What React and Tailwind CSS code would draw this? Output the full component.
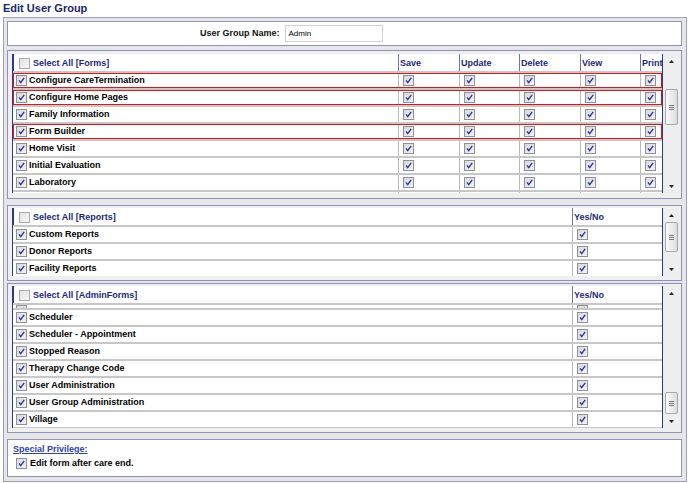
import React from 'react';

const FORMS = [
  { name: 'Configure CareTermination', flag: true },
  { name: 'Configure Home Pages', flag: true },
  { name: 'Family Information' },
  { name: 'Form Builder', flag: true },
  { name: 'Home Visit' },
  { name: 'Initial Evaluation' },
  { name: 'Laboratory' },
];

const REPORTS = ['Custom Reports', 'Donor Reports', 'Facility Reports'];

const ADMIN_FORMS = [
  'Scheduler',
  'Scheduler - Appointment',
  'Stopped Reason',
  'Therapy Change Code',
  'User Administration',
  'User Group Administration',
  'Village',
];

const FORM_COLS = ['Save', 'Update', 'Delete', 'View', 'Print'];
const FORM_GRID = 'grid grid-cols-[385px_61px_60px_61px_60px_23px]';
const YES_GRID = 'grid grid-cols-[559px_91px]';

function Box({ checked = true }) {
  if (!checked) {
    return (
      <span className="block h-[11px] w-[11px] shrink-0 border border-[#a9aaae] bg-linear-to-br from-[#e2e2e2] to-[#f7f7f7]" />
    );
  }
  return (
    <span className="flex h-[11px] w-[11px] shrink-0 items-center justify-center border border-[#8e9096] bg-linear-to-br from-[#d9d9dc] to-[#f3f3f3]">
      <svg width="7" height="7" viewBox="0 0 7 7">
        <path d="M1 3.4 L2.7 5.6 L6.2 0.8" stroke="#2a3898" strokeWidth="1.4" fill="none" />
      </svg>
    </span>
  );
}

function Arrow({ up }) {
  return (
    <svg width="5" height="3" viewBox="0 0 5 3">
      <path d={up ? 'M0 3 L2.5 0 L5 3 Z' : 'M0 0 L5 0 L2.5 3 Z'} fill="#222" />
    </svg>
  );
}

function Scrollbar({ thumbTop, thumbH }) {
  return (
    <div className="flex w-[16px] flex-col bg-[#eeeeee]">
      <div className="flex h-[14px] items-center justify-center">
        <Arrow up />
      </div>
      <div className="flex-1">
        <div
          className="mx-auto flex w-[13px] flex-col items-center justify-center gap-[1px] rounded-[2px] border border-[#a7a7a7] bg-linear-to-r from-[#fbfbfb] to-[#dcdcdc]"
          style={{ marginTop: thumbTop, height: thumbH }}
        >
          <span className="h-px w-[5px] bg-[#7a7a7a]" />
          <span className="h-px w-[5px] bg-[#7a7a7a]" />
          <span className="h-px w-[5px] bg-[#7a7a7a]" />
        </div>
      </div>
      <div className="flex h-[14px] items-center justify-center">
        <Arrow />
      </div>
    </div>
  );
}

function SelectAllCell({ label }) {
  return (
    <div className="flex items-center gap-[3px] border-l border-[#2c3a8c] pl-[5px] pt-[2px] text-[#1c2878]">
      <Box checked={false} />
      <span>{label}</span>
    </div>
  );
}

function HeadCell({ label }) {
  return (
    <div className="flex items-center whitespace-nowrap border-l border-[#7276ad] pl-[1px] pt-[2px] text-[#1c2878]">
      {label}
    </div>
  );
}

function NameCell({ label }) {
  return (
    <div className="flex items-center gap-[2px] overflow-hidden pl-[3px] text-black">
      <Box />
      <span className="whitespace-nowrap">{label}</span>
    </div>
  );
}

function BoxCell({ sliver }) {
  return (
    <div className={`flex border-l border-[#b9b9b9] pl-[4px] ${sliver ? 'items-end' : 'items-center'}`}>
      <Box />
    </div>
  );
}

function Panel({ className = '', children }) {
  return (
    <div className={`flex border border-[#8e90bd] bg-[#efefef] pl-[4px] pr-[2px] ${className}`}>{children}</div>
  );
}

export default function App() {
  return (
    <div className="h-[483px] w-[690px] overflow-hidden bg-white font-['Liberation_Sans',Arial,sans-serif] text-[9px] font-bold leading-none">
      <h1 className="h-[17px] pl-[3px] pt-[2px] text-[11px] font-bold leading-[12px] text-[#1b256c]">Edit User Group</h1>

      <div className="ml-[3px] flex h-[465px] w-[684px] flex-col border border-[#9c9ec4] bg-[#e6e6e6] pb-[3px] pl-[3px] pr-[4px] pt-[3px]">
        {/* group name */}
        <div className="flex h-[25px] shrink-0 items-center border border-[#8e90bd] bg-white pl-[192px]">
          <span className="text-[#111]">User Group Name:</span>
          <div className="ml-[5px] flex h-[17px] w-[98px] items-center border border-[#cfcfcf] bg-white pl-[3px] text-[8px] font-normal text-black">
            Admin
          </div>
        </div>

        {/* forms */}
        <Panel className="mt-[4px] h-[149px] shrink-0 pb-[5px] pt-[3px]">
          <div className="flex h-[139px] w-[652px] flex-col gap-[2px] overflow-hidden border-x border-[#2c3a8c] bg-[#c7c7c7]">
            <div className={`${FORM_GRID} h-[17px] shrink-0 bg-white`}>
              <SelectAllCell label="Select All [Forms]" />
              {FORM_COLS.map((c) => (
                <HeadCell key={c} label={c} />
              ))}
            </div>
            {FORMS.map((f) => (
              <div
                key={f.name}
                className={`${FORM_GRID} h-[15px] shrink-0 bg-white ${f.flag ? 'outline-1 -outline-offset-1 outline-[#e01515]' : ''}`}
              >
                <NameCell label={f.name} />
                {FORM_COLS.map((c) => (
                  <BoxCell key={c} />
                ))}
              </div>
            ))}
            <div className={`${FORM_GRID} h-[15px] shrink-0 bg-white`}>
              <div />
              {FORM_COLS.map((c) => (
                <div key={c} className="border-l border-[#b9b9b9]" />
              ))}
            </div>
          </div>
          <Scrollbar thumbTop={21} thumbH={36} />
        </Panel>

        {/* reports */}
        <Panel className="mt-[6px] h-[76px] shrink-0 pb-[4px] pt-[2px]">
          <div className="flex h-[68px] w-[652px] flex-col gap-[2px] overflow-hidden border-x border-[#2c3a8c] bg-[#c7c7c7]">
            <div className={`${YES_GRID} h-[17px] shrink-0 bg-white`}>
              <SelectAllCell label="Select All [Reports]" />
              <HeadCell label="Yes/No" />
            </div>
            {REPORTS.map((r) => (
              <div key={r} className={`${YES_GRID} h-[15px] shrink-0 bg-white`}>
                <NameCell label={r} />
                <BoxCell />
              </div>
            ))}
          </div>
          <Scrollbar thumbTop={0} thumbH={30} />
        </Panel>

        {/* admin forms */}
        <Panel className="mt-[2px] h-[150px] shrink-0 pb-[4px] pt-[2px]">
          <div className="flex h-[142px] w-[652px] flex-col gap-[2px] overflow-hidden border-x border-[#2c3a8c] bg-[#c7c7c7]">
            <div className={`${YES_GRID} h-[17px] shrink-0 bg-white`}>
              <SelectAllCell label="Select All [AdminForms]" />
              <HeadCell label="Yes/No" />
            </div>
            <div className={`${YES_GRID} h-[3px] shrink-0 overflow-hidden bg-white`}>
              <div className="flex items-end pl-[3px]">
                <Box />
              </div>
              <BoxCell sliver />
            </div>
            {ADMIN_FORMS.map((r) => (
              <div key={r} className={`${YES_GRID} h-[15px] shrink-0 bg-white`}>
                <NameCell label={r} />
                <BoxCell />
              </div>
            ))}
          </div>
          <Scrollbar thumbTop={92} thumbH={22} />
        </Panel>

        {/* special privilege */}
        <div className="mt-[6px] flex h-[38px] shrink-0 flex-col border border-[#8e90bd] bg-white pl-[5px] pt-[5px]">
          <span className="text-[#2f44a6] underline underline-offset-1">Special Privilege:</span>
          <div className="mt-[4px] flex items-center gap-[3px] pl-[3px] text-black">
            <Box />
            <span>Edit form after care end.</span>
          </div>
        </div>
      </div>
    </div>
  );
}
